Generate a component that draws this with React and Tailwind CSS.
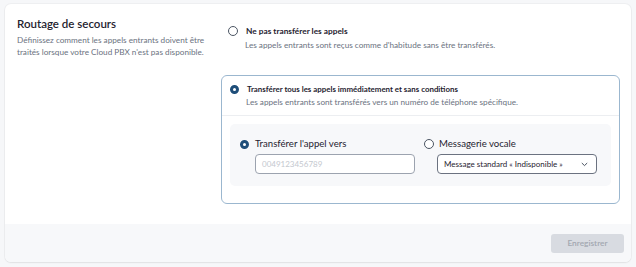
import React from "react";

function Radio({ checked }) {
  return checked ? (
    <span className="box-border inline-block h-[9px] w-[9px] shrink-0 rounded-full border-[3px] border-[#1f4e79] bg-white" />
  ) : (
    <span className="box-border inline-block h-[10px] w-[10px] shrink-0 rounded-full border border-[#4b5563] bg-white" />
  );
}

export default function App() {
  return (
    <div className="min-h-screen bg-[#f6f7f9] pl-[5px] pr-[5px] pt-[4px] pb-[5px]" style={{ fontFamily: "Lato, 'Noto Sans', sans-serif" }}>
      <div className="flex h-[258px] w-[626px] flex-col overflow-hidden rounded-[6px] bg-white shadow-[0_0_0_1px_rgba(0,0,0,0.03),0_1px_2px_rgba(0,0,0,0.06)]">
        <div className="flex h-[220px] pl-[12px] pr-[11px]">
          <div className="w-[204px] pt-[11px]">
            <div className="text-[11.5px] font-semibold leading-[18px] text-[#1f2330]">Routage de secours</div>
            <div className="mt-[1px] text-[8.2px] leading-[12px] text-[#6b7280]">
              Définissez comment les appels entrants doivent être traités lorsque votre Cloud PBX n'est pas disponible.
            </div>
          </div>
          <div className="flex-1">
            <div className="pl-[7px] pt-[20px]">
              <div className="flex items-center">
                <Radio />
                <div className="ml-[8px] text-[8.3px] font-bold leading-[14px] text-[#1f2330]">Ne pas transférer les appels</div>
              </div>
              <div className="pl-[17px] pt-[1px] text-[8.2px] leading-[12px] text-[#6b7280]">Les appels entrants sont reçus comme d'habitude sans être transférés.</div>
            </div>
            <div className="mt-[24px] h-[129px] rounded-[6px] border border-[#9bb7cf]">
              <div className="border-b border-[#eceef1] pl-[8px] pt-[6px] pb-[7px]">
                <div className="flex items-center">
                  <Radio checked />
                  <div className="ml-[8px] text-[7.9px] font-bold leading-[14px] text-[#1f2330]">Transférer tous les appels immédiatement et sans conditions</div>
                </div>
                <div className="pl-[16px] pt-[0px] text-[8.2px] leading-[12px] text-[#6b7280]">Les appels entrants sont transférés vers un numéro de téléphone spécifique.</div>
              </div>
              <div className="mx-[8px] mt-[8px] flex h-[62px] rounded-[5px] bg-[#f7f8fa] pl-[10px] pr-[12px] pt-[13px]">
                <div className="w-[184px]">
                  <div className="flex items-center">
                    <Radio checked />
                    <span className="ml-[6px] text-[9.6px] leading-[14px] text-[#1f2330]">Transférer l'appel vers</span>
                  </div>
                  <div className="ml-[15px] mt-[3px] flex h-[20px] w-[160px] items-center rounded-[4px] border border-[#9ca3af] bg-white px-[6px] text-[8px] text-[#c4c8cf]">
                    0049123456789
                  </div>
                </div>
                <div className="flex-1">
                  <div className="flex items-center">
                    <Radio />
                    <span className="ml-[5px] text-[9.6px] leading-[14px] text-[#1f2330]">Messagerie vocale</span>
                  </div>
                  <div className="ml-[13px] mt-[3px] flex h-[20px] w-[160px] items-center justify-between rounded-[4px] border border-[#6b7280] bg-white pl-[6px] pr-[8px] text-[8px] text-[#1f2330]">
                    <span>Message standard « Indisponible »</span>
                    <svg width="7" height="5" viewBox="0 0 7 5" fill="none"><path d="M0.8 1l2.7 2.6L6.2 1" stroke="#374151" strokeWidth="0.9" /></svg>
                  </div>
                </div>
              </div>
            </div>
          </div>
        </div>
        <div className="flex flex-1 items-center justify-end bg-[#f7f8fa] pr-[7px]">
          <button className="h-[19px] w-[73px] rounded-[3px] bg-[#d8dbe1] text-[8.3px] font-semibold text-[#a2a7b0]">Enregistrer</button>
        </div>
      </div>
    </div>
  );
}
